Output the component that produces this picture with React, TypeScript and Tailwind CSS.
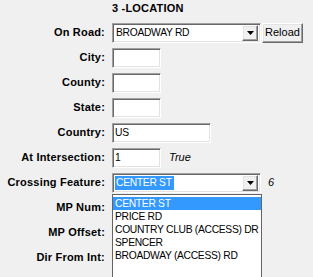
import React from 'react';

const sunken =
  'border border-t-[#a0a0a0] border-l-[#a0a0a0] border-b-white border-r-white shadow-[inset_1px_1px_0_#696969,inset_-1px_-1px_0_#e3e3e3]';
const raised =
  'border border-t-white border-l-white border-b-[#696969] border-r-[#696969] shadow-[inset_-1px_-1px_0_#a0a0a0,inset_1px_1px_0_#e3e3e3] bg-[#f0f0f0]';

const roads = ['CENTER ST', 'PRICE RD', 'COUNTRY CLUB (ACCESS) DR', 'SPENCER', 'BROADWAY (ACCESS) RD'];

const Arrow = () => (
  <svg width="7" height="4" viewBox="0 0 7 4">
    <path d="M0 0h7L3.5 4z" fill="#000" />
  </svg>
);

const TextBox: React.FC<{ value?: string; width: string }> = ({ value = '', width }) => (
  <div className={`${sunken} ${width} h-[20px] bg-white flex items-center px-[2px] text-[10.3px] tracking-[-0.3px]`}>
    <span>{value}</span>
  </div>
);

const Combo: React.FC<{ value: string; selected?: boolean }> = ({ value, selected }) => (
  <div className={`${sunken} w-[149px] h-[20px] bg-white flex items-center p-[2px]`}>
    <div className="flex-1 flex items-center h-full text-[10.3px] tracking-[-0.3px]">
      <span
        className={
          selected ? 'bg-[#3399ff] text-white h-[14px] flex items-center px-[1px] pr-[2px]' : 'px-[1px]'
        }
      >
        {value}
      </span>
    </div>
    <div className={`${raised} w-[16px] h-[16px] flex items-center justify-center`}>
      <Arrow />
    </div>
  </div>
);

const Row: React.FC<{ label: string; children?: React.ReactNode }> = ({ label, children }) => (
  <div className="flex items-center h-[25px]">
    <div className="w-[106px] text-right font-bold pr-[1px] tracking-[0.2px]">{label}</div>
    <div className="ml-[6px] flex items-center">{children}</div>
  </div>
);

const App: React.FC = () => {
  return (
    <div
      className="w-[313px] h-[277px] overflow-hidden bg-[#f0f0f0] text-black text-[11px] leading-[13px]"
      style={{ fontFamily: '"Liberation Sans", Arial, sans-serif' }}
    >
      <div className="h-[20px] pl-[112px] pt-[2px] font-bold tracking-[0.2px]">3 -LOCATION</div>
      <Row label="On Road:">
        <Combo value="BROADWAY RD" />
        <div className={`${raised} ml-[1px] w-[41px] h-[20px] flex items-center justify-center`}>Reload</div>
      </Row>
      <Row label="City:">
        <TextBox width="w-[49px]" />
      </Row>
      <Row label="County:">
        <TextBox width="w-[49px]" />
      </Row>
      <Row label="State:">
        <TextBox width="w-[49px]" />
      </Row>
      <Row label="Country:">
        <TextBox width="w-[99px]" value="US" />
      </Row>
      <Row label="At Intersection:">
        <TextBox width="w-[49px]" value="1" />
        <span className="ml-[8px] italic">True</span>
      </Row>
      <Row label="Crossing Feature:">
        <div className="relative">
          <Combo value="CENTER ST" selected />
          <div className="absolute left-0 top-[21px] w-[150px] h-[90px] bg-white border border-[#646464] z-10 pt-[2px] text-[10.3px] tracking-[-0.3px]">
            {roads.map((r, i) => (
              <div
                key={r}
                className={`h-[13px] px-[2px] whitespace-nowrap ${i === 0 ? 'bg-[#3399ff] text-white' : ''}`}
              >
                {r}
              </div>
            ))}
          </div>
        </div>
        <span className="ml-[7px] italic">6</span>
      </Row>
      <Row label="MP Num:" />
      <Row label="MP Offset:" />
      <Row label="Dir From Int:" />
    </div>
  );
};

export default App;
